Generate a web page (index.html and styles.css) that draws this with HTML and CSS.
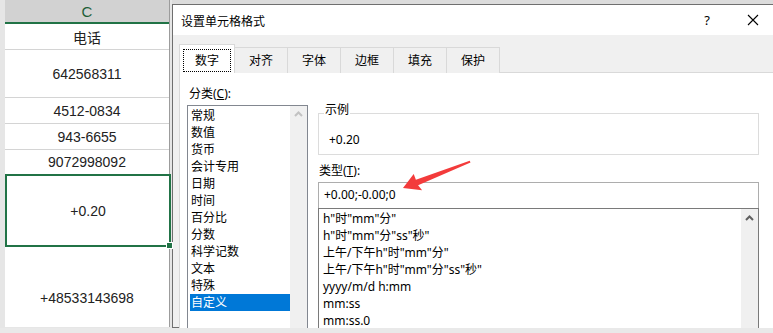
FILE: index.html
```html
<!DOCTYPE html>
<html lang="zh-CN">
  <head>
    <meta charset="UTF-8" />
    <title>设置单元格格式</title>
    <link rel="stylesheet" href="styles.css">
  </head>
  <body>
    <div class="screen">
      <div class="main">
        <div class="sheet">
          <div class="col">
            <div class="col-head">C</div>
            <div class="cell r1">电话</div>
            <div class="cell r2">642568311</div>
            <div class="cell r3">4512-0834</div>
            <div class="cell r3">943-6655</div>
            <div class="cell r4">9072998092</div>
            <div class="cell selected">+0.20<span class="handle"></span></div>
            <div class="cell last">+48533143698</div>
          </div>
        </div>

        <div class="dialog">
          <div class="titlebar">
            <span class="title">设置单元格格式</span>
            <span class="tb-btn">?</span>
            <span class="tb-btn">
              <svg width="12" height="12" viewBox="0 0 12 12">
                <path d="M1 1 L11 11 M11 1 L1 11" stroke="#000" stroke-width="1.1" fill="none" />
              </svg>
            </span>
          </div>

          <div class="dlg-body">
            <div class="tabs">
              <div class="tab active"><span class="focus">数字</span></div>
              <div class="tab">对齐</div>
              <div class="tab">字体</div>
              <div class="tab">边框</div>
              <div class="tab">填充</div>
              <div class="tab">保护</div>
            </div>

            <div class="panel">
              <div class="left">
                <div class="label">分类(<u>C</u>):</div>
                <div class="listbox catlist">
                  <ul>
                    <li>常规</li>
                    <li>数值</li>
                    <li>货币</li>
                    <li>会计专用</li>
                    <li>日期</li>
                    <li>时间</li>
                    <li>百分比</li>
                    <li>分数</li>
                    <li>科学记数</li>
                    <li>文本</li>
                    <li>特殊</li>
                    <li class="sel">自定义</li>
                  </ul>
                  <div class="vscroll">
                    <svg width="17" height="17" viewBox="0 0 17 17">
                      <path d="M5 10 L8.5 6.5 L12 10" stroke="#c2c2c2" stroke-width="2" fill="none" />
                    </svg>
                  </div>
                </div>
              </div>

              <div class="right">
                <fieldset class="sample">
                  <legend>示例</legend>
                  <div class="sample-val">+0.20</div>
                </fieldset>
                <div class="label type-label">类型(<u>T</u>):</div>
                <div class="typeinput">+0.00;-0.00;0</div>
                <div class="listbox typelist">
                  <ul>
                    <li>h"时"mm"分"</li>
                    <li>h"时"mm"分"ss"秒"</li>
                    <li>上午/下午h"时"mm"分"</li>
                    <li>上午/下午h"时"mm"分"ss"秒"</li>
                    <li>yyyy/m/d h:mm</li>
                    <li>mm:ss</li>
                    <li>mm:ss.0</li>
                  </ul>
                  <div class="vscroll">
                    <svg width="17" height="17" viewBox="0 0 17 17">
                      <path d="M5 11 L8.5 7.5 L12 11" stroke="#606060" stroke-width="2" fill="none" />
                    </svg>
                  </div>
                </div>
              </div>
            </div>
          </div>
        </div>
      </div>
      <div class="bottom-strip"></div>

      <svg class="arrow" width="773" height="333" viewBox="0 0 773 333">
        <polygon points="403,188 413.7,174.1 415.9,179.7 469.7,160.8 470.5,162.6 418.1,185.3 422.1,190.2" fill="#f33b3b" />
      </svg>
    </div>
  </body>
</html>
```

FILE: styles.css
```css
body {
  margin: 0;
  padding: 0;
  background-color: #e3e3e3;
}

.screen {
  position: relative;
  width: 773px;
  height: 333px;
  overflow: hidden;
  background-color: #dcdcdc;
}

.main {
  display: flex;
  height: 328px;
  overflow: hidden;
}

/* spreadsheet column */

.sheet {
  width: 172px;
  flex-shrink: 0;
  box-sizing: border-box;
  padding-left: 5px;
  padding-right: 2px;
  background-color: #e6e6e6;
}

.col {
  width: 164px;
  border-right: 1px solid #9c9c9c;
  background-color: #ffffff;
  font-family: "Liberation Sans", "Noto Sans CJK SC", sans-serif;
  font-size: 14px;
  color: #222;
}

.col-head {
  height: 22px;
  line-height: 24px;
  text-align: center;
  background-color: #d2d2d2;
  border-bottom: 2px solid #217346;
  color: #1e5e38;
  font-size: 15px;
}

.cell {
  display: flex;
  align-items: center;
  justify-content: center;
  border-bottom: 1px solid #d4d4d4;
}

.r1 { height: 25px; }
.r2 { height: 47px; }
.r3 { height: 25px; }
.r4 { height: 24px; border-bottom: none; }

.cell.selected {
  position: relative;
  height: 69px;
  margin-right: -2px;
  border: 2px solid #217346;
}

.handle {
  position: absolute;
  right: -4px;
  bottom: -4px;
  width: 5px;
  height: 5px;
  background-color: #217346;
  border: 1px solid #ffffff;
}

.cell.last {
  height: 80px;
  align-items: flex-start;
  padding-top: 43px;
  box-sizing: border-box;
  border-bottom: none;
}

/* dialog */

.dialog {
  width: 603px;
  flex-shrink: 0;
  margin-top: 4px;
  border: 1px solid #6f6f6f;
  background-color: #f0f0f0;
  font-family: "Noto Sans", "Noto Sans CJK SC", sans-serif;
  font-size: 12px;
  color: #000;
}

.titlebar {
  display: flex;
  align-items: center;
  height: 30px;
  background-color: #ffffff;
}

.title {
  flex: 1;
  padding-left: 8px;
  padding-top: 1px;
}

.tb-btn {
  width: 46px;
  height: 30px;
  display: flex;
  align-items: center;
  justify-content: center;
  font-size: 13px;
}

.dlg-body {
  padding: 9px 0 0 6px;
}

.tabs {
  display: flex;
  align-items: flex-end;
  position: relative;
  z-index: 1;
  margin-bottom: -1px;
}

.tab {
  width: 52px;
  height: 25px;
  line-height: 25px;
  text-align: center;
  border: 1px solid #d9d9d9;
  border-bottom: none;
  margin-left: -1px;
  background-color: #f0f0f0;
}

.tab.active {
  width: 54px;
  height: 28px;
  margin-left: 0;
  background-color: #ffffff;
  display: flex;
  align-items: center;
  justify-content: center;
}

.focus {
  display: block;
  width: 46px;
  height: 21px;
  line-height: 21px;
  margin-top: 3px;
  outline: 1px dotted #000;
  text-align: center;
}

.panel {
  display: flex;
  width: 586px;
  height: 300px;
  padding: 12px 0 0 7px;
  gap: 10px;
  background-color: #ffffff;
  border: 1px solid #d9d9d9;
}

.label {
  line-height: 17px;
  padding-left: 2px;
}

.left {
  width: 121px;
}

.listbox {
  display: flex;
  position: relative;
  border: 1px solid #828790;
  background-color: #ffffff;
}

.listbox ul {
  flex: 1;
  list-style: none;
  margin: 0;
  padding: 1px 0 0 2px;
}

.listbox li {
  height: 17px;
  line-height: 17px;
  white-space: nowrap;
}

.catlist {
  margin-top: 3px;
  height: 240px;
}

.catlist li {
  padding-left: 1px;
}

.catlist li.sel {
  background-color: #0078d7;
  color: #ffffff;
}

.vscroll {
  width: 17px;
  background-color: #f0f0f0;
}

.vscroll svg {
  display: block;
}

.right {
  width: 441px;
}

.sample {
  margin: 18px 0 0 0;
  padding: 0 10px 6px 10px;
  border: 1px solid #dcdcdc;
}

.sample legend {
  padding: 0 1px 6px 1px;
  margin-left: -5px;
  line-height: 14px;
}

.sample-val {
  line-height: 17px;
  padding-top: 8px;
}

.type-label {
  margin-top: 7px;
  padding-left: 1px;
}

.typeinput {
  margin-top: 3px;
  height: 26px;
  line-height: 23px;
  box-sizing: border-box;
  padding-left: 5px;
  border: 1px solid #adadad;
  border-bottom: none;
}

.typelist {
  height: 140px;
  border-color: #7a7a7a;
}

.typelist ul {
  padding-left: 4px;
}

.bottom-strip {
  height: 5px;
  background-color: #e9e9e9;
}

.arrow {
  position: absolute;
  left: 0;
  top: 0;
  pointer-events: none;
}
```
